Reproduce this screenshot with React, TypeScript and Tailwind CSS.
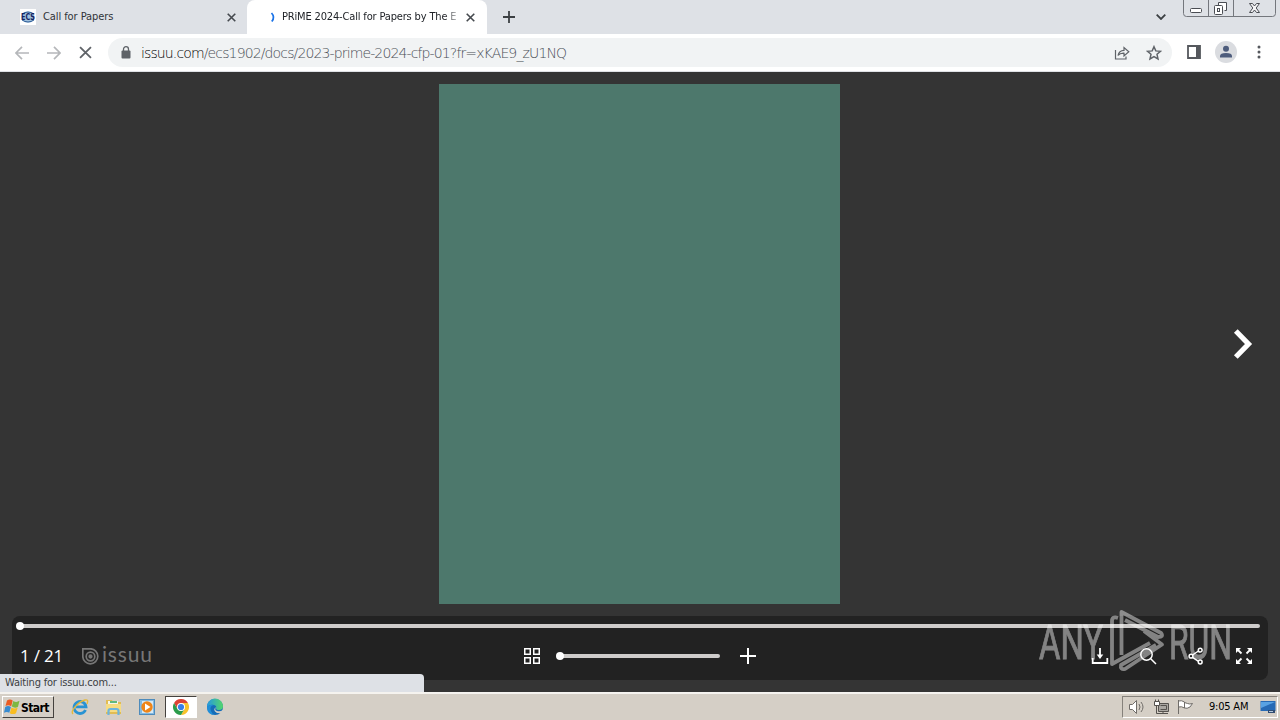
import type { ReactNode } from "react";

const tabFont = "font-['DejaVu_Sans_Condensed','DejaVu_Sans',sans-serif] [font-stretch:condensed]";

function Cross({ size = 9, color = "#45494e", width = 1.8 }: { size?: number; color?: string; width?: number }) {
  return (
    <svg width={size} height={size} viewBox="0 0 10 10" stroke={color} strokeWidth={width} fill="none">
      <path d="M.8.8 9.2 9.2M9.2.8.8 9.2" />
    </svg>
  );
}

function EcsIcon() {
  return (
    <svg width="16" height="16" viewBox="0 0 16 16">
      <rect width="16" height="16" fill="#fff" />
      <ellipse cx="8" cy="8" rx="6.5" ry="5.5" fill="#9fc0dd" />
      <path d="M2 5Q8 1 14 5M2 11Q8 15 14 11" stroke="#2c5b96" fill="none" />
      <text x="1" y="11" fontSize="8" fontWeight="900" textLength="14" lengthAdjust="spacingAndGlyphs" fill="#142463" fontFamily="DejaVu Sans, sans-serif">ECS</text>
    </svg>
  );
}

function TabStrip() {
  return (
    <div className="flex h-[34px] bg-[#dee1e6]">
      <div className="flex w-[247px] items-center pl-5 pr-[11px]">
        <EcsIcon />
        <span className={`ml-[7px] mt-px flex-1 whitespace-nowrap text-[11px] tracking-[-0.080px] text-[#303338] ${tabFont}`}>Call for Papers</span>
        <Cross />
      </div>
      <div className="flex w-60 items-center rounded-t-lg bg-white pl-[19px] pr-3">
        <svg width="16" height="16" viewBox="0 0 16 16" fill="none">
          <path d="M5.500 4Q9.300 8 5.800 12.500" stroke="#1a73e8" strokeWidth="1.700" />
        </svg>
        <span className={`mt-px w-[178px] whitespace-nowrap text-[11px] tracking-[-0.160px] text-[#202328] [mask-image:linear-gradient(to_right,black_162px,transparent_180px)] ${tabFont}`}>PRiME 2024-Call for Papers by The E</span>
        <span className="ml-auto"><Cross /></span>
      </div>
      <div className="flex w-11 items-center justify-center">
        <svg width="12" height="12" viewBox="0 0 12 12" stroke="#3c4043" strokeWidth="1.800"><path d="M6 0v12M0 6h12" /></svg>
      </div>
      <div className="flex flex-1 items-center justify-end pr-[17px]">
        <svg width="10" height="6" viewBox="0 0 10 6" fill="none" stroke="#3c4043" strokeWidth="1.800"><path d="M.7.7 5 5 9.300.7" /></svg>
      </div>
      <svg className="mr-[4px]" width="93" height="18" viewBox="0 0 93 18" fill="none" stroke="#74777d">
        <path d="M.5 0v13.500q0 3 3 3h86q3 0 3-3V0M25.500 0v16M50.500 0v16" />
        <g stroke="#4a4d53">
          <rect x="7.500" y="8.500" width="11" height="4" rx="1" fill="#fff" />
          <path d="M35.500 5V2.500h8v8h-2" fill="#fff" />
          <rect x="31.500" y="5.500" width="8" height="9" rx="1" fill="#fff" />
          <rect x="34.500" y="8.500" width="2" height="3" />
          <path d="m66.500 3.500 3 0 2 2.500 2-2.500 3 0-3.300 4.500 3.300 4.500-3 0-2-2.500-2 2.500-3 0 3.300-4.500z" fill="#f4f4f6" />
        </g>
      </svg>
    </div>
  );
}

function Toolbar() {
  return (
    <div className="flex h-[38px] items-center border-b border-[#dfe1e5] bg-white">
      <div className="flex w-[108px] shrink-0 items-center pl-[15px]">
        <svg width="14" height="14" viewBox="0 0 14 14" fill="none" stroke="#b5b7ba" strokeWidth="1.700"><path d="M14 7H1.500M7 .8.9 7 7 13.200" /></svg>
        <svg className="ml-[18px]" width="14" height="14" viewBox="0 0 14 14" fill="none" stroke="#b5b7ba" strokeWidth="1.700"><path d="M0 7h12.500M7 .8 13.100 7 7 13.200" /></svg>
        <span className="ml-[18px]"><Cross size={13} color="#5f6368" width={1.4} /></span>
      </div>
      <div className="flex h-[29px] w-[1064px] items-center rounded-full bg-[#f1f3f4] pl-[13px] pr-[10px]">
        <svg width="10" height="13" viewBox="0 0 10 13" fill="none">
          <rect x="0.500" y="4.500" width="9" height="8" rx="1" fill="#5f6368" />
          <path d="M2.500 5V3.200a2.500 2.500 0 0 1 5 0V5" stroke="#5f6368" strokeWidth="1.300" />
        </svg>
        <span className="ml-[10px] mt-px flex-1 whitespace-nowrap font-['DejaVu_Sans',sans-serif] text-[14px] font-extralight tracking-[-0.870px] text-[#494e54]">
          <span className="text-black">issuu.com</span>/ecs1902/docs/2023-prime-2024-cfp-01?fr=xKAE9_zU1NQ
        </span>
        <svg width="16" height="16" viewBox="0 0 16 16" fill="none" stroke="#5f6368" strokeWidth="1.200">
          <path d="M1.500 5v9h10.500v-2.500M4 10.500Q5 5.500 10 5.300V2.500l4.800 4.300-4.800 4.200V8.200Q6 8 4 10.500z" />
        </svg>
        <svg className="ml-4" width="16" height="16" viewBox="0 0 16 16" fill="none" stroke="#5f6368" strokeWidth="1.500">
          <path d="m8 1.700 1.800 4.200 4.700.4-3.500 3 1 4.600-4-2.400-4 2.400 1-4.600-3.500-3 4.700-.4z" />
        </svg>
      </div>
      <svg className="ml-[15px] -mt-px" width="14" height="14" viewBox="0 0 14 14">
        <path d="M1 1h12v12H1z" fill="none" stroke="#55585d" strokeWidth="1.800" /><path d="M9 1h4v12H9z" fill="#55585d" />
      </svg>
      <svg className="ml-[14px] -mt-px" width="22" height="22" viewBox="0 0 22 22">
        <circle cx="11" cy="11" r="11" fill="#dadce0" />
        <circle cx="11" cy="7.800" r="3" fill="#4d5c7c" /><path d="M5 16.500v-1.500q0-3 6-3t6 3v1.500z" fill="#4d5c7c" />
      </svg>
      <svg className="ml-[20px] -mt-px" width="4" height="14" viewBox="0 0 4 14" fill="#55585d">
        <circle cx="2" cy="2" r="1.500" /><circle cx="2" cy="7" r="1.500" /><circle cx="2" cy="12" r="1.500" />
      </svg>
    </div>
  );
}

function Watermark() {
  return (
    <svg className="pointer-events-none absolute left-[1036px] top-[536px]" width="200" height="66" viewBox="1036 608 200 66" opacity="0.440">
      <g fill="#fff" stroke="#fff" strokeWidth="0.900" fontFamily="Roboto, sans-serif" fontSize="49">
        <text x="1039" y="658.500" textLength="64" lengthAdjust="spacingAndGlyphs">ANY</text>
        <text x="1169" y="658.500" textLength="63" lengthAdjust="spacingAndGlyphs">RUN</text>
      </g>
      <g fill="none" stroke="#fff" strokeWidth="3.800" strokeLinejoin="round">
        <path d="M1118 618Q1112 616 1112 621V664L1150 643" />
        <path d="M1121.500 655V612L1161 633Q1164 637 1158 637L1125 620" />
        <path d="M1144 631L1162 644.500 1125 669Q1120 670 1121 665L1156 645" />
      </g>
    </svg>
  );
}

function Control({ children, className = "" }: { children: ReactNode; className?: string }) {
  return (
    <svg className={className} width="18" height="18" viewBox="0 0 18 18" fill="none" stroke="#fff" strokeWidth="1.500">
      {children}
    </svg>
  );
}

function Reader() {
  return (
    <main className="relative flex h-[620px] flex-col bg-[#343434] px-3 pt-3">
      <div className="grid h-[520px] grid-cols-[427px_401px_1fr]">
        <div />
        <div className="bg-[#4d786c]" />
        <div className="flex items-center justify-end pr-[15px]">
          <svg width="20" height="30" viewBox="0 0 20 30" fill="none" stroke="#fff" strokeWidth="5.200"><path d="M2.800 2 15.500 15 2.800 28" /></svg>
        </div>
      </div>
      <div className="mt-3 h-16 rounded-lg bg-[#222222]">
        <div className="flex h-5 items-center px-1">
          <div className="z-10 h-2 w-2 rounded-full bg-white" />
          <div className="-ml-1 mr-1 h-1 flex-1 rounded-r bg-[#cecccb]" />
        </div>
        <div className="flex h-10 items-center pl-2 pr-[15px]">
          <span className="w-[62px] whitespace-nowrap font-['Open_Sans',sans-serif] text-[17px] font-medium tracking-[-0.200px] text-white">1 / 21</span>
          <svg width="17" height="17" viewBox="0 0 17 17" fill="none" stroke="#777" strokeWidth="1.700">
            <path d="M.8 .8H8.500A7.500 7.500 0 1 1 .8 8.500z" /><circle cx="8.500" cy="8.500" r="4.300" /><circle cx="8.500" cy="8.500" r="1.300" fill="#777" />
          </svg>
          <span className="ml-[3px] -mt-1 w-[59px] font-['Lato',sans-serif] text-[21px] leading-5 tracking-[0.800px] text-[#777]">issuu</span>
          <svg className="ml-[363px]" width="16" height="16" viewBox="0 0 16 16" fill="none" stroke="#fff" strokeWidth="1.500">
            <path d="M.75.75h5.500v5.500H.75zM9.750.75h5.500v5.500h-5.500zM.75 9.750h5.500v5.500H.75zM9.750 9.750h5.500v5.500h-5.500z" />
          </svg>
          <div className="ml-4 flex w-[164px] items-center">
            <div className="z-10 h-2 w-2 shrink-0 rounded-full bg-white" />
            <div className="-ml-1 h-1 w-[160px] rounded-full bg-[#cecccb]" />
          </div>
          <svg className="ml-5" width="16" height="16" viewBox="0 0 16 16" stroke="#fff" strokeWidth="2"><path d="M8 0v16M0 8h16" /></svg>
          <Control className="ml-auto"><path d="M9 1v8M1.700 11v5h14.600v-5" strokeWidth="1.800" /><path d="M5.700 7.500h6.600L9 12z" fill="#fff" stroke="none" /></Control>
          <Control className="ml-[30px]"><circle cx="7.500" cy="7.500" r="5.700" /><path d="m11.500 11.500 5.500 5.500" /></Control>
          <Control className="ml-[30px]"><path d="m5.500 8 6-4M5.500 10.300l6 4" /><circle cx="4" cy="9.200" r="1.900" /><circle cx="13.200" cy="3.200" r="1.900" /><circle cx="13.200" cy="15" r="1.900" /></Control>
          <Control className="ml-[30px]">
            <path d="m2.500 2.500 4 4M15.500 2.500l-4 4M2.500 15.500l4-4M15.500 15.500l-4-4" strokeWidth="1.800" />
            <path d="M1 1h5L1 6zM12 1h5v5zM1 12v5h5zM17 12v5h-5z" fill="#fff" stroke="none" />
          </Control>
        </div>
      </div>
      <Watermark />
      <div className={`absolute bottom-0 left-0 flex h-[18px] w-[424px] items-center rounded-tr bg-[#dee1e6] pl-[5px] pt-px text-[11px] tracking-[-0.190px] text-[#3c4043] ${tabFont}`}>Waiting for issuu.com...</div>
    </main>
  );
}

function Taskbar() {
  return (
    <footer className="flex h-7 items-center border-t-2 border-[#f5f3ef] bg-[#d5cfc6]">
      <button className="ml-[2px] flex h-[22px] w-[52px] items-center border border-b-[#45423e] border-l-white border-r-[#45423e] border-t-white pl-[1px]">
        <svg className="shrink-0" width="16" height="16" viewBox="0 0 16 16">
          <path d="M3 1.500q3-2 5.700 0L7.200 7.300Q4.500 5.500 1.500 7z" fill="#e95b23" /><path d="M9.300 2q3 2 6.200-.2L14 7.800q-3 1.800-6.200-.2z" fill="#7db742" />
          <path d="M1.200 8q3-1.800 5.700 0L5.300 13.800q-2.500-1.800-5.300 0z" fill="#378bd0" /><path d="M7.500 8.500q3 1.800 6.200 0L12 14.200q-3 1.800-6.200 0z" fill="#f9bd20" />
        </svg>
        <span className="ml-px mt-px font-['DejaVu_Sans_Condensed','DejaVu_Sans',sans-serif] text-[12px] font-bold tracking-[-0.600px] text-black [font-stretch:condensed]">Start</span>
      </button>
      <svg className="ml-[17px]" width="18" height="18" viewBox="0 0 18 18" fill="none">
        <path d="M14.500 12A6 6 0 1 1 15 8.800H5" stroke="#2993d3" strokeWidth="2.800" />
        <path d="M2 16C-1 13 7 4 14 2q4-1 2 4" stroke="#e5b93d" strokeWidth="1.400" />
      </svg>
      <svg className="ml-[16px]" width="18" height="18" viewBox="0 0 18 18">
        <path d="M1 4V2h6l1 2h8v12H1z" fill="#e1bc53" /><path d="M3 3h10v6H3z" fill="#f4f5e8" /><path d="M5 3h7v2H5z" fill="#60b97e" />
        <path d="M1 6h15v8H1z" fill="#f6dc82" /><path d="M3.500 17v-4q0-2 2-2h6q2 0 2 2v4" fill="none" stroke="#6db4dc" strokeWidth="2.200" />
      </svg>
      <svg className="ml-[16px]" width="16" height="18" viewBox="0 0 16 18">
        <rect x=".5" y="1.500" width="15" height="15" fill="#83bae2" stroke="#4e8bbb" /><rect x="3" y="3" width="11" height="12" fill="#d6e9f5" />
        <circle cx="8" cy="9" r="5.700" fill="#ef8518" /><path d="m6 5.500 5.500 3.500L6 12.500z" fill="#fff" />
      </svg>
      <div className="ml-[10px] flex h-[22px] w-8 items-center justify-center border border-b-white border-l-[#45423e] border-r-white border-t-[#45423e] bg-white">
        <svg width="16" height="16" viewBox="0 0 16 16">
          <path d="M4.540 10 1.070 4A8 8 0 0 1 14.930 4H8z" fill="#dc4335" /><path d="M14.930 4H8l3.460 6L8 16a8 8 0 0 0 6.930-12z" fill="#f8c22c" /><path d="M1.070 4A8 8 0 0 0 8 16l3.460-6H4.540z" fill="#2b9c4b" />
          <circle cx="8" cy="8" r="4" fill="#fff" /><circle cx="8" cy="8" r="3.100" fill="#387fe8" />
        </svg>
      </div>
      <svg className="ml-[9px]" width="18" height="18" viewBox="0 0 18 18">
        <defs><linearGradient id="edge"><stop stopColor="#2598e0" /><stop offset="1" stopColor="#54d76a" /></linearGradient></defs>
        <circle cx="9" cy="9" r="8" fill="#156cb8" /><path d="M1 9a8 8 0 0 1 16-1q0 4-4 4-3 0-3-2 1-2-2-3-4-1-7 2" fill="url(#edge)" />
        <path d="M10 9q-2 3 1 4 3 1 6-1l1 2-1 2q-2-1-6-1-5-3-1-6" fill="#d5cfc6" /><path d="M8 7q-5 1-3 6 1 3 4 4-8 0-8-8 3-3 7-2" fill="#218ed8" />
      </svg>
      <div className="ml-auto mr-[2px] flex h-[22px] w-[156px] items-center border border-b-white border-l-[#85817b] border-r-white border-t-[#85817b] pl-[5px] pr-px">
        <svg className="shrink-0" width="18" height="16" viewBox="0 0 18 16" fill="none" stroke="#706d69"><path d="M1.500 5.500h3l4-4v13l-4-4h-3z" fill="#fff" /><path d="M11 5q2 3 0 6M13 3q4 5 0 10" /></svg>
        <svg className="ml-[7px] shrink-0" width="17" height="16" viewBox="0 0 17 16" fill="none" stroke="#55524e"><path d="M5.500 4.500h10v8h-10z" fill="#aaa7a2" /><path d="M7.500 6.500h6v4h-6M10 13v2M6 14.500h9M3.500 6v8.500h4" /><path d="M1.500 2.500h5v4h-5zM2.500.5v2M5.500.5v2" fill="#fff" /></svg>
        <svg className="ml-[7px] shrink-0" width="17" height="16" viewBox="0 0 17 16" fill="#fff" stroke="#706d69"><path d="M1.500 1v14M1.500 2q3-1 6 1v6q-3-2-6-1M7.500 3.500l3 1q2 1 5 0L13 8q-3 2-5.500 1" /></svg>
        <span className={`ml-[15px] mt-px whitespace-nowrap text-[11px] tracking-[-0.200px] text-black ${tabFont}`}>9:05 AM</span>
        <svg className="ml-auto shrink-0" width="16" height="14" viewBox="0 0 16 14"><path d="M.5 1h15v10H.5z" fill="#266ab5" /><path d="M1 2h14L1 8z" fill="#58a2e3" /><path d="M8 10h7v3H8z" fill="#304c72" /><path d="M9 11h4v1H9z" fill="#b3c9dd" /></svg>
      </div>
    </footer>
  );
}

export default function App() {
  return (
    <div className="flex h-[720px] w-[1280px] flex-col overflow-hidden">
      <TabStrip />
      <Toolbar />
      <Reader />
      <Taskbar />
    </div>
  );
}
